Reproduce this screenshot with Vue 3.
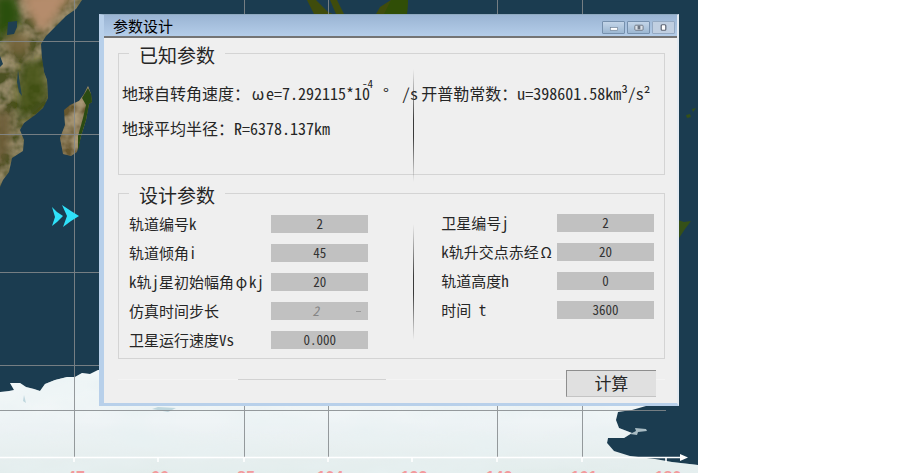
<script setup>
import { ref } from 'vue'

const leftFields = ref([
  { id: 'orbit-no', parts: ['轨道编号k'], value: '2' },
  { id: 'incline', parts: ['轨道倾角i'], value: '45' },
  { id: 'phase', parts: ['k轨j星初始幅角', 'φ', 'kj'], value: '20' },
  { id: 'step', parts: ['仿真时间步长'], value: '2', select: true },
  { id: 'speed', parts: ['卫星运行速度Vs'], value: '0.000' }
])
const rightFields = ref([
  { id: 'sat-no', parts: ['卫星编号j'], value: '2' },
  { id: 'raan', parts: ['k轨升交点赤经', 'Ω'], value: '20' },
  { id: 'height', parts: ['轨道高度h'], value: '0' },
  { id: 'time', parts: ['时间 t'], value: '3600' }
])
const columns = [leftFields, rightFields]

const meridians = [74, 244, 328, 497, 582]
const parallels = [41, 134, 272, 365]
const ticks = [
  { x: 74, label: '47' },
  { x: 158, label: '66' },
  { x: 244, label: '85' },
  { x: 328, label: '104' },
  { x: 412, label: '123' },
  { x: 497, label: '142' },
  { x: 582, label: '161' },
  { x: 666, label: '180' }
]
</script>

<template>
  <main class="stage">
    <svg class="map" viewBox="0 0 698 473" preserveAspectRatio="xMinYMin slice" aria-hidden="true">
      <defs>
        <filter id="land" x="0" y="0" width="100%" height="100%">
          <feTurbulence type="fractalNoise" baseFrequency="0.07" numOctaves="3" seed="8" result="n" />
          <feColorMatrix in="n" type="matrix" values="0 0 0 0 0.50  0 0 0 0 0.40  0 0 0 0 0.24  1.6 0 0 0 -0.5" result="c" />
          <feComposite in="c" in2="SourceGraphic" operator="in" result="t" />
          <feMerge>
            <feMergeNode in="SourceGraphic" />
            <feMergeNode in="t" />
          </feMerge>
        </filter>
        <filter id="ice" x="0" y="0" width="100%" height="100%">
          <feTurbulence type="fractalNoise" baseFrequency="0.012 0.035" numOctaves="3" seed="4" result="n" />
          <feColorMatrix in="n" type="matrix" values="0 0 0 0 0.80  0 0 0 0 0.88  0 0 0 0 0.89  1.6 0 0 0 -0.55" result="c" />
          <feComposite in="c" in2="SourceGraphic" operator="in" result="t" />
          <feMerge>
            <feMergeNode in="SourceGraphic" />
            <feMergeNode in="t" />
          </feMerge>
        </filter>
        <filter id="haze" x="-30%" y="-30%" width="160%" height="160%">
          <feGaussianBlur stdDeviation="5" />
        </filter>
        <linearGradient id="snow" x1="0" y1="0" x2="0" y2="1">
          <stop offset="0" stop-color="#f6fafb" />
          <stop offset="0.5" stop-color="#eff4f6" />
          <stop offset="1" stop-color="#e2eceb" />
        </linearGradient>
        <clipPath id="africa">
          <path d="M0 0H82L76 9 66 16 56 26 46 36 41 44 42 58 44 72 47 80 48 98 43 108 35 115 24 123 20 130 24 140 23 151 12 158 9 172 3 180 0 187Z" />
        </clipPath>
      </defs>
      <rect width="698" height="473" fill="#1b3c50" />
      <g clip-path="url(#africa)">
        <g filter="url(#land)">
          <rect width="90" height="190" fill="#4b5120" />
        </g>
        <g filter="url(#haze)">
          <path d="M20 -8H76L54 20 42 34 36 26 28 14Z" fill="#b58c6c" />
          <path d="M-6 -6H16L22 18 10 38 -6 40Z" fill="#2c500b" />
          <path d="M22 62 44 58 50 98 20 124 16 96Z" fill="#3f4f10" opacity="0.8" />
          <path d="M8 30 32 38 24 58 8 52Z" fill="#77663d" />
          <path d="M-4 112 10 110 8 150 -4 176Z" fill="#6a5a35" />
        </g>
        <path d="M8 22 17 21 17 27 14 34 7 35Z" fill="#1f3f50" />
        <path d="M18 70 20 84 22 96 19 92 17 82Z" fill="#264650" />
        <path d="M0 56 3 64 0 67Z" fill="#1f3f50" />
      </g>
      <g filter="url(#land)">
        <path d="M88 86 91 94 92 102 89 104 86 120 81 136 77 152 71 156 63 154 60 138 65 125 64 110 70 105 79 101 84 94Z" fill="#66572f" />
      </g>
      <path d="M88 88 91 94 92 102 89 104 86 120 81 136 78 151 78 136 83 118 86 105 82 98 85 93Z" fill="#2b4b12" />
      <path d="M307 0H316L328 12 333 14H314ZM330 0H337L344 14H336ZM391 0H408L407 14H376L380 7Z" fill="#3f4c0c" />
      <path d="M391 0H408L407 14H384Z" fill="#304e06" />
      <path d="M686 115 690 114 691 117 687 118ZM692 109 696 108 693 112ZM678 220 684 222 691 221 685 229 679 238Z" fill="#355018" />
      <g filter="url(#ice)">
        <path d="M0 392 9 391 14 390 10 383 20 383 26 387 34 389 40 391 45 384 55 380 67 377 75 377 82 373 90 374 98 370H650V406L646 406 632 410 618 412 616 420 619 428 632 433 624 438 608 438 607 443 614 451 630 456 655 459 672 462 698 465V473H0Z" fill="url(#snow)" />
      </g>
      <path d="M630 434 636 431 635 428 646 429 647 431 638 432 637 435Z" fill="#a9bcc4" />
      <path d="M24 395 26 403 23 401ZM158 407 176 408 168 412 152 409Z" fill="#bfd7de" />
      <g stroke="#858a8d" stroke-width="1" opacity="0.85">
        <line v-for="x in meridians" :key="'m' + x" :x1="x + 0.5" y1="0" :x2="x + 0.5" y2="457" />
        <line v-for="y in parallels" :key="'p' + y" x1="0" :y1="y + 0.5" x2="666" :y2="y + 0.5" />
        <line x1="0" y1="410.5" x2="666" y2="410.5" />
      </g>
      <path d="M52 207 57 212 63 216 57 222 52 226 55 217ZM62 205 71 211 79 216 71 221 63 227 67 216Z" fill="#2fe2fa" />
      <path d="M0 457.5H682" stroke="#fff" stroke-width="1.6" />
      <path d="M680 454 688 457.5 680 461Z" fill="#fff" />
      <g v-for="tick in ticks" :key="tick.x">
        <line :x1="tick.x" :x2="tick.x" y1="458" y2="462" stroke="#fff" stroke-width="1.6" />
        <text class="tick" :x="tick.x + 2" y="483" text-anchor="middle">{{ tick.label }}</text>
      </g>
    </svg>

    <section class="dialog" role="dialog" aria-labelledby="dialog-title">
      <header class="titlebar">
        <h1 id="dialog-title">参数设计</h1>
        <div class="controls">
          <button type="button" aria-label="最小化">
            <svg viewBox="0 0 20 12"><rect x="6.5" y="6" width="8" height="3" fill="#fff" stroke="#6b7c90" stroke-width=".7" /></svg>
          </button>
          <button type="button" aria-label="最大化">
            <svg viewBox="0 0 20 12"><rect x="6" y="3.5" width="9" height="5.5" rx="1" fill="#dde3ea" stroke="#6b7480" /><rect x="9" y="4" width="3" height="4" fill="#6b7480" /></svg>
          </button>
          <button type="button" class="pale" aria-label="关闭">
            <svg viewBox="0 0 20 12"><rect x="7.5" y="3" width="5" height="6" rx="1" fill="#fff" stroke="#5c6472" stroke-width="1.3" /></svg>
          </button>
        </div>
      </header>

      <form class="client" @submit.prevent>
        <fieldset class="known">
          <legend>已知参数</legend>
          <div class="halves">
            <div class="facts">
              <p>地球自转角速度：<span class="wide">ω</span>e=7.292115*1<span class="power">0<sup>-4</sup></span><span class="wide">°</span> /s</p>
              <p>地球平均半径：R=6378.137km</p>
            </div>
            <div class="facts">
              <p>开普勒常数：u=398601.58km³/s²</p>
            </div>
          </div>
        </fieldset>

        <fieldset class="design">
          <legend>设计参数</legend>
          <div class="halves">
            <div v-for="(column, c) in columns" :key="c" class="fields">
              <div v-for="field in column.value" :key="field.id" class="field">
                <label :for="field.id">
                  <span v-for="(part, i) in field.parts" :key="i" :class="{ wide: i === 1 }">{{ part }}</span>
                </label>
                <span v-if="field.select" class="picker">
                  <select :id="field.id" v-model="field.value" disabled>
                    <option>2</option>
                  </select>
                </span>
                <input v-else :id="field.id" v-model="field.value" type="text" />
              </div>
            </div>
          </div>
        </fieldset>

        <footer class="actions">
          <button type="submit">计算</button>
        </footer>
      </form>
    </section>
  </main>
</template>

<style>
body {
  background: #fff;
}
</style>

<style scoped>
.stage {
  position: relative;
  box-sizing: border-box;
  width: 77.2%;
  min-height: 100vh;
  padding: 14px 19px 67px 99px;
  overflow: hidden;
  font-family: "Noto Sans CJK SC", sans-serif;
  font-feature-settings: "hwid" 1;
  color: #262626;
}

.map {
  position: absolute;
  inset: 0;
  width: 100%;
  height: 100%;
}

.tick {
  font: bold 16px "Liberation Sans", sans-serif;
  fill: #f39a9c;
}

.dialog {
  position: relative;
  box-sizing: border-box;
  border: solid #b8d0ea;
  border-width: 1px 2px 3px 5px;
  border-top-color: #8fa9c0;
  border-right-color: #e4ebf2;
  background: #efefef;
}

.titlebar {
  display: flex;
  align-items: center;
  justify-content: space-between;
  height: 21px;
  padding: 0 2px 0 9px;
  background: linear-gradient(#9ab4d3, #b4cde9);
  border-bottom: 2px solid #747474;
}

.titlebar h1 {
  margin: 0;
  font-size: 15px;
  font-weight: 400;
  line-height: 21px;
  color: #000;
}

.controls {
  display: flex;
  gap: 2px;
  padding-top: 3px;
}

.controls button {
  display: block;
  width: 23px;
  height: 13px;
  padding: 0;
  border: 1px solid #7690ad;
  border-radius: 1px;
  background: linear-gradient(#c3d5e8, #9cb7d2);
}

.controls .pale {
  border-color: #94a9c2;
  background: #c0cfe1;
}

.controls svg {
  display: block;
  width: 100%;
  height: 100%;
}

.client {
  padding: 1px 12px 6px 14px;
}

fieldset {
  position: relative;
  min-width: 0;
  margin: 0;
  padding: 0;
  border: 1px solid #d4d4d4;
}

fieldset::after {
  content: "";
  position: absolute;
  left: 54%;
  width: 1px;
  background: linear-gradient(transparent, #3a3a3a 45%, #3a3a3a 60%, transparent);
}

.known::after {
  top: 2px;
  bottom: -8px;
}

.design {
  margin-top: 4px;
}

.design::after {
  top: 17px;
  bottom: 18px;
}

legend {
  margin-left: 10px;
  padding: 6px 10px 2px;
  font-size: 19px;
  line-height: 20px;
}

.halves {
  display: grid;
  grid-template-columns: 54fr 46fr;
}

.known .halves {
  padding: 16px 0 36px;
}

.facts {
  display: grid;
  align-content: start;
  gap: 15px;
  min-width: 0;
  padding-left: 3px;
  font-size: 16px;
  line-height: 20px;
  white-space: nowrap;
}

.facts + .facts {
  padding-left: 8px;
}

.facts p {
  margin: 0;
}

.wide {
  display: inline-block;
  width: 1em;
  text-align: center;
}

.power {
  position: relative;
  margin-right: 8px;
}

.power sup {
  position: absolute;
  top: -6px;
  left: 0;
  font-size: 11px;
  line-height: 16px;
}

.design .halves {
  padding: 8px 0 9px;
}

.fields {
  display: grid;
  align-content: start;
  gap: 11px;
  min-width: 0;
  padding: 0 45px 0 10px;
}

.fields + .fields {
  margin-top: -1px;
  padding: 0 10px 0 28px;
}

.field {
  display: flex;
  align-items: center;
  justify-content: space-between;
  height: 18px;
}

.field label {
  font-size: 15px;
  line-height: 18px;
  white-space: nowrap;
}

.field input,
.field select {
  display: block;
  box-sizing: border-box;
  width: 97px;
  height: 18px;
  padding: 0;
  border: 0;
  border-radius: 0;
  background: #c1c1c1;
  font: inherit;
  font-feature-settings: inherit;
  font-size: 13px;
  line-height: 18px;
  text-align: center;
  color: #333;
}

.picker {
  position: relative;
}

.picker::after {
  content: "";
  position: absolute;
  top: 9px;
  right: 7px;
  width: 5px;
  height: 1px;
  background: #999;
}

.field select {
  appearance: none;
  padding-right: 8px;
  text-align-last: center;
  font-style: italic;
  color: #848484;
  opacity: 1;
}

.actions {
  position: relative;
  display: flex;
  justify-content: flex-end;
  padding: 11px 9px 0 0;
}

.actions::before {
  content: "";
  position: absolute;
  top: 20px;
  left: 0;
  right: 0;
  height: 1px;
  background: linear-gradient(90deg, #f4f4f4 22%, #d2d2d2 22%, #d2d2d2 49%, #f4f4f4 49%);
}

.actions button {
  position: relative;
  width: 90px;
  height: 27px;
  padding: 0 0 2px;
  border: solid #8e8e8e;
  border-width: 1px 0 0 1px;
  border-bottom: 1px solid #c4c4c4;
  background: #e0e0e0;
  font: inherit;
  font-size: 17px;
  line-height: 23px;
  color: #262626;
}
</style>
